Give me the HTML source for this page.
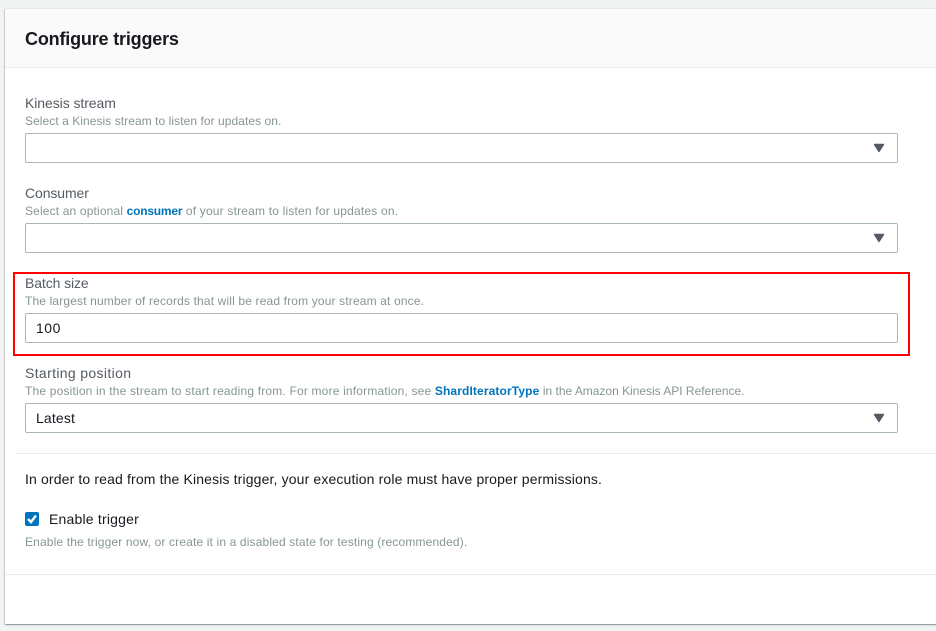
<!DOCTYPE html>
<html><head><meta charset="utf-8"><style>
html,body{margin:0;padding:0;background:#f2f3f3}
body{width:936px;height:631px;overflow:hidden;position:relative;font-family:"Liberation Sans",sans-serif}
.a{position:absolute;white-space:nowrap}
.card{left:5px;top:9px;width:931px;height:615px;background:#fff;box-shadow:0 1px 1px 0 rgba(0,28,36,.45),-1px 0 1px 0 rgba(0,28,36,.1),0 -1px 1px 0 rgba(0,28,36,.04)}
.head{left:5px;top:9px;width:931px;height:58px;background:#fafafa;border-bottom:1px solid #eaeded}
.h{left:25px;top:27px;font-size:18px;line-height:24px;font-weight:700;color:#16191f;letter-spacing:-.18px}
.l{left:25px;font-size:14px;line-height:20px;color:#545b64}
.d{left:25px;font-size:12px;line-height:16px;color:#879596}
.d a{color:#0073bb;font-weight:700}
.i{left:25px;width:871px;height:28px;background:#fff;border:1px solid #aab7b8;border-radius:2px}
.v{left:36px;font-size:14px;line-height:20px;color:#16191f}
.ar{left:873px}
.hr{height:1px;background:#eaeded}
</style></head><body>
<div class="a card"></div>
<div class="a head"></div>
<div class="a h">Configure triggers</div>

<div class="a l" style="top:93px;letter-spacing:-.07px">Kinesis stream</div>
<div class="a d" style="top:113px;letter-spacing:.06px">Select a Kinesis stream to listen for updates on.</div>
<div class="a i" style="top:133px"></div>
<svg class="a ar" style="top:143px" width="12" height="10"><path d="M1.5 1.5H10.5L6 8.5Z" fill="#545b64" stroke="#545b64" stroke-width="1.4" stroke-linejoin="round"/></svg>

<div class="a l" style="top:183px;letter-spacing:-.1px">Consumer</div>
<div class="a d" style="top:203px;letter-spacing:.15px">Select an optional <a style="letter-spacing:-.2px">consumer</a> <span style="letter-spacing:.19px">of your stream to listen for updates on.</span></div>
<div class="a i" style="top:223px"></div>
<svg class="a ar" style="top:233px" width="12" height="10"><path d="M1.5 1.5H10.5L6 8.5Z" fill="#545b64" stroke="#545b64" stroke-width="1.4" stroke-linejoin="round"/></svg>

<div class="a" style="left:13px;top:272px;width:893px;height:80px;border:2px solid #f00"></div>
<div class="a l" style="top:273px;letter-spacing:-.1px">Batch size</div>
<div class="a d" style="top:293px;letter-spacing:.15px">The largest number of records that will be read from your stream at once.</div>
<div class="a i" style="top:313px"></div>
<div class="a v" style="top:318px;letter-spacing:.5px">100</div>

<div class="a l" style="top:363px;letter-spacing:.35px">Starting position</div>
<div class="a d" style="top:383px;letter-spacing:.18px">The position in the stream to start reading from. For more information, see <a style="letter-spacing:.12px">ShardIteratorType</a> <span style="letter-spacing:-.015px">in the Amazon Kinesis API Reference.</span></div>
<div class="a i" style="top:403px"></div>
<div class="a v" style="top:408px;letter-spacing:.15px">Latest</div>
<svg class="a ar" style="top:413px" width="12" height="10"><path d="M1.5 1.5H10.5L6 8.5Z" fill="#545b64" stroke="#545b64" stroke-width="1.4" stroke-linejoin="round"/></svg>

<div class="a hr" style="left:15px;top:453px;width:921px"></div>
<div class="a v" style="left:25px;top:469px;letter-spacing:.14px">In order to read from the Kinesis trigger, your execution role must have proper permissions.</div>

<svg class="a" style="left:25px;top:512px" width="14" height="14"><rect width="14" height="14" rx="2" fill="#0073bb"/><path d="M3 7L6 10L11 3.5" fill="none" stroke="#fff" stroke-width="2.4"/></svg>
<div class="a v" style="left:49px;top:509px;letter-spacing:.2px">Enable trigger</div>
<div class="a d" style="top:534px;letter-spacing:.146px">Enable the trigger now, or create it in a disabled state for testing (recommended).</div>

<div class="a hr" style="left:5px;top:574px;width:931px"></div>
</body></html>
